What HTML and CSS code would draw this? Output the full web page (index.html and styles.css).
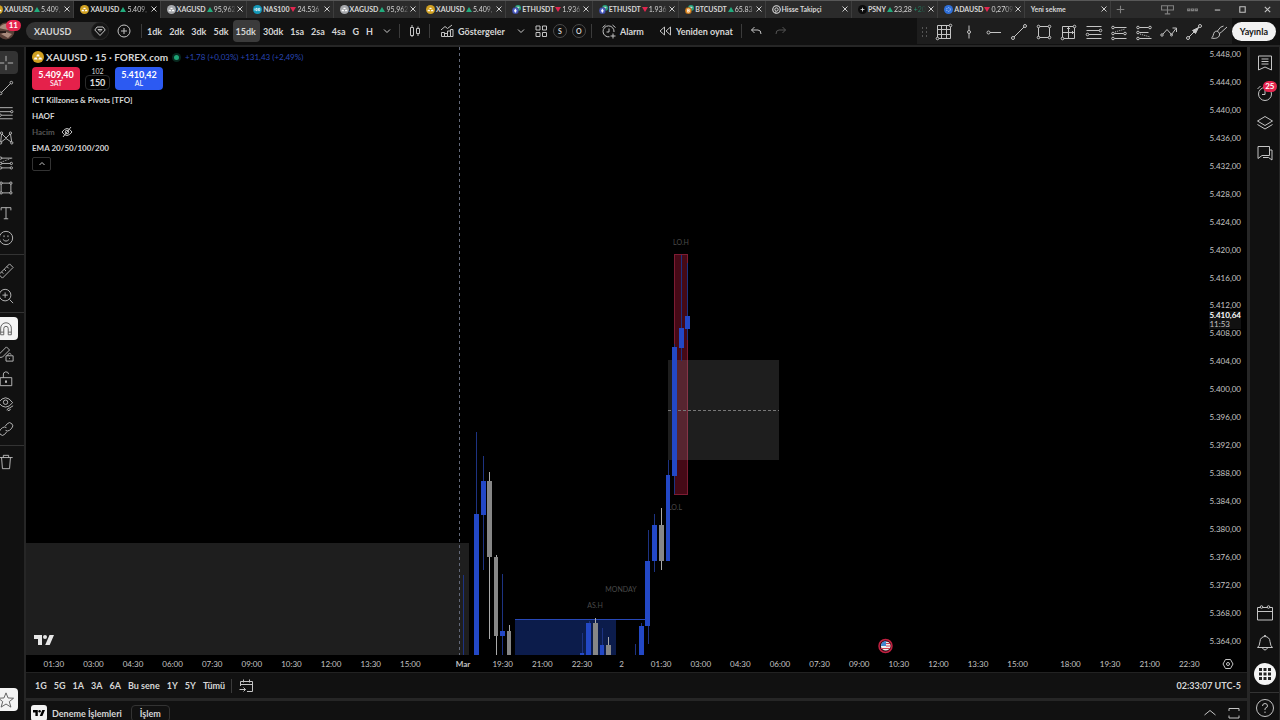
FILE: index.html
```
<!DOCTYPE html>
<html lang="tr">
<head>
    <meta charset="UTF-8">
    <meta name="viewport" content="width=device-width, initial-scale=1.0">
    <title>XAUUSD</title>
    <link rel="stylesheet" href="styles.css">
</head>
<body>
    <svg class="defs" aria-hidden="true">
        <symbol id="gold" viewBox="0 0 12 12"><circle cx="6" cy="6" r="6" fill="#d0a021"/><path d="M4.3 5.4 5 3.6h2l.7 1.8zM1.9 8.4l.7-2h2.2l.8 2zM6.3 8.4l.8-2h2.2l.8 2z" fill="#fff"/></symbol>
        <symbol id="silver" viewBox="0 0 12 12"><circle cx="6" cy="6" r="6" fill="#a5a7ab"/><path d="M4.3 5.4 5 3.6h2l.7 1.8zM1.9 8.4l.7-2h2.2l.8 2zM6.3 8.4l.8-2h2.2l.8 2z" fill="#fff"/></symbol>
        <symbol id="nas" viewBox="0 0 12 12"><circle cx="6" cy="6" r="6" fill="#1398b8"/><path d="M2.5 4.5v3M4 4.5h1.600v3H4zM7.300 4.500h1.800v3H7.300z" fill="none" stroke="#fff"/></symbol>
        <symbol id="eth" viewBox="0 0 12 12"><circle cx="8" cy="4" r="4" fill="#26a17b"/><path d="M6 3h4M8 3v3" stroke="#fff"/><circle cx="4.500" cy="7.500" r="4.500" fill="#4b5cc4" stroke="#222" stroke-width=".5"/><path d="m4.500 4.500 1.800 3-1.800 3-1.800-3z" fill="#fff"/></symbol>
        <symbol id="btc" viewBox="0 0 12 12"><circle cx="8" cy="4" r="4" fill="#26a17b"/><path d="M6 3h4M8 3v3" stroke="#fff"/><circle cx="4.500" cy="7.500" r="4.500" fill="#e58b22" stroke="#222" stroke-width=".5"/><path d="M3.500 5.500v4h1.500a1 1 0 0 0 0-2H3.500 5a1 1 0 0 0 0-2z" fill="none" stroke="#fff"/></symbol>
        <symbol id="target" viewBox="0 0 12 12"><circle cx="6" cy="6" r="5" fill="none" stroke="#ddd" stroke-width="1.500"/><circle cx="6" cy="6" r="2.200" fill="none" stroke="#ddd" stroke-width="1.300"/><path d="M5 8.500V11" stroke="#ddd"/></symbol>
        <symbol id="psny" viewBox="0 0 12 12"><circle cx="6" cy="6" r="6" fill="#0b0b0b"/><path d="M6 2.500 6.700 5.300 9.500 6 6.700 6.700 6 9.500 5.300 6.700 2.500 6l2.800-.7z" fill="#ddd"/></symbol>
        <symbol id="ada" viewBox="0 0 12 12"><circle cx="6" cy="6" r="6" fill="#2f6fd8"/><circle cx="6" cy="6" r="2.500" fill="none" stroke="#cfe0ff" stroke-dasharray="1.500 1"/></symbol>
        <symbol id="x" viewBox="0 0 6 6"><path d="m.5.5 5 5m0-5-5 5" fill="none" stroke="#ccc"/></symbol>
        <symbol id="down" viewBox="0 0 8 8"><path d="m1 2.500 3 3 3-3" fill="none" stroke="#ccc"/></symbol>
        <symbol id="tv" viewBox="0 0 20 10"><path d="M0 0h8v10H4V4H0zM15.500 0H20l-4.300 10h-4.500z"/><circle cx="11" cy="2" r="2"/></symbol>
    </svg>
    <div class="app">
        <header class="tabs">
            <nav class="tablist">
                <a class="tab" href="#"><svg class="coin"><use href="#gold"/></svg><b>XAUUSD</b><i class="up"></i><span class="quote">5.409,</span><svg class="close"><use href="#x"/></svg></a>
                <a class="tab active" href="#"><svg class="coin"><use href="#gold"/></svg><b>XAUUSD</b><i class="up"></i><span class="quote">5.409,</span><svg class="close"><use href="#x"/></svg></a>
                <a class="tab" href="#"><svg class="coin"><use href="#silver"/></svg><b>XAGUSD</b><i class="up"></i><span class="quote">95,962</span><svg class="close"><use href="#x"/></svg></a>
                <a class="tab" href="#"><svg class="coin"><use href="#nas"/></svg><b>NAS100</b><i class="dn"></i><span class="quote">24.536</span><svg class="close"><use href="#x"/></svg></a>
                <a class="tab" href="#"><svg class="coin"><use href="#silver"/></svg><b>XAGUSD</b><i class="up"></i><span class="quote">95,962</span><svg class="close"><use href="#x"/></svg></a>
                <a class="tab" href="#"><svg class="coin"><use href="#gold"/></svg><b>XAUUSD</b><i class="up"></i><span class="quote">5.409,</span><svg class="close"><use href="#x"/></svg></a>
                <a class="tab" href="#"><svg class="coin"><use href="#eth"/></svg><b>ETHUSDT</b><i class="dn"></i><span class="quote">1.936</span><svg class="close"><use href="#x"/></svg></a>
                <a class="tab" href="#"><svg class="coin"><use href="#eth"/></svg><b>ETHUSDT</b><i class="dn"></i><span class="quote">1.936</span><svg class="close"><use href="#x"/></svg></a>
                <a class="tab" href="#"><svg class="coin"><use href="#btc"/></svg><b>BTCUSDT</b><i class="up"></i><span class="quote">65.83</span><svg class="close"><use href="#x"/></svg></a>
                <a class="tab" href="#"><svg class="coin"><use href="#target"/></svg><b class="wide">Hisse Takipçi</b><svg class="close"><use href="#x"/></svg></a>
                <a class="tab" href="#"><svg class="coin"><use href="#psny"/></svg><b>PSNY</b><i class="up"></i><span class="quote">23,28 <em>+20</em></span><svg class="close"><use href="#x"/></svg></a>
                <a class="tab" href="#"><svg class="coin"><use href="#ada"/></svg><b>ADAUSD</b><i class="dn"></i><span class="quote">0,2709</span><svg class="close"><use href="#x"/></svg></a>
                <a class="tab" href="#"><b class="wide">Yeni sekme</b><svg class="close"><use href="#x"/></svg></a>
            </nav>
            <div class="window">
                <button aria-label="Yeni sekme"><svg viewBox="0 0 12 12"><path class="dim" d="M6 2.500v7M2.500 6h7"/></svg></button>
                <span class="grow"></span>
                <button aria-label="Düzen"><svg viewBox="0 0 12 12"><path class="dim" d="M.5 2.500h11v4H.5zM6 2.500V10M3.500 10h5"/></svg></button>
                <button aria-label="Menü"><svg viewBox="0 0 12 12"><path class="dim" d="M1.500 5.500h2v1.500h-2zM5 5.500h2v1.500H5zM8.500 5.500h2v1.500h-2z"/></svg></button>
                <button aria-label="Küçült"><svg viewBox="0 0 12 12"><path d="M3.500 6.500h5"/></svg></button>
                <button aria-label="Büyüt"><svg viewBox="0 0 12 12"><path d="M3.500 3.500h5v5h-5z"/></svg></button>
                <button aria-label="Kapat"><svg viewBox="0 0 12 12"><path d="m3.500 3.500 5 5m0-5-5 5"/></svg></button>
            </div>
        </header>

        <div class="toolbar">
            <button class="avatar" aria-label="Profil">
                <svg viewBox="0 0 18 18"><circle cx="9" cy="9" r="8.500" fill="#5a4038" stroke="none"/><path d="M2 6c3-5 10-6 13-1l-4 3-5-1zM4 12l5-2 6 2-4 4z" fill="#a88a7c" stroke="none"/><path d="M3 9h6v2H3z" fill="#261a18" stroke="none"/></svg>
                <span class="badge">11</span>
            </button>
            <button class="symbol">XAUUSD <svg viewBox="0 0 18 18"><circle cx="9" cy="9" r="8.500" fill="#161616" stroke="#222"/><path d="M6 5h6l2.200 3L9 13.500 3.800 8zM9 9.500 7 7.500h4z"/></svg></button>
            <button class="icon plus" aria-label="Ekle"><svg viewBox="0 0 18 18"><circle cx="9" cy="9" r="6"/><path d="M9 6v6M6 9h6"/></svg></button>
            <span class="sep"></span>
            <div class="frames">
                <button>1dk</button><button>2dk</button><button>3dk</button><button>5dk</button><button class="on">15dk</button><button>30dk</button><button>1sa</button><button>2sa</button><button>4sa</button><button>G</button><button>H</button>
            </div>
            <button class="icon" aria-label="Aralıklar"><svg class="small"><use href="#down"/></svg></button>
            <span class="sep"></span>
            <button class="icon wide" aria-label="Mumlar"><svg viewBox="0 0 18 18"><path d="M4.500 5.500h3v8h-3zM6 3v2.500M6 13.500V15M10.500 6.500h3v5h-3zM12 4.500v2M12 11.500V14"/></svg></button>
            <span class="sep"></span>
            <button class="labelled ind"><svg viewBox="0 0 18 18"><path d="M3.500 14.500v-4h3v4zM6.500 14.500v-3h3v3zM9.500 14.500V9h3v5.500zM12.500 14.500V7.500h2.500v7zM3 8l4-3.500 2.500 2L14 3"/></svg>Göstergeler</button>
            <button class="icon" aria-label="Favori göstergeler"><svg class="small"><use href="#down"/></svg></button>
            <button class="icon" aria-label="Şablonlar"><svg viewBox="0 0 18 18"><path d="M4 4h4v4H4zM10.500 4h4v4h-4zM4 10.500h4v4H4zM10.500 10.500h4v4h-4z"/></svg></button>
            <button class="round">S</button>
            <button class="round">O</button>
            <span class="sep"></span>
            <button class="labelled"><svg viewBox="0 0 18 18"><path d="M14 10a5.500 5.500 0 1 0-4.500 4.800M9 6.500v3.500H6.500M2.500 5.500l3-2.500M12.500 3l3 2.500M13 11.500v5M10.500 14h5"/></svg>Alarm</button>
            <button class="labelled replay"><svg viewBox="0 0 18 18"><path d="M8.500 5v8L4 9zM14.500 5v8L10 9z"/></svg>Yeniden oynat</button>
            <span class="sep"></span>
            <button class="icon wide" aria-label="Geri al"><svg viewBox="0 0 18 18"><path d="M7.500 5 4.500 8l3 3M4.500 8H11q3 0 3 4"/></svg></button>
            <button class="icon wide" aria-label="Yinele"><svg viewBox="0 0 18 18"><path class="faint" d="m10.500 5 3 3-3 3M13.500 8H7q-3 0-3 4"/></svg></button>
            <span class="grow"></span>
            <div class="favorites">
                <svg class="handle" viewBox="0 0 7 10"><path d="M1 0h1v2H1zM5 0h1v2H5zM1 4h1v2H1zM5 4h1v2H5zM1 8h1v2H1zM5 8h1v2H5z"/></svg>
                <button aria-label="Izgara"><svg viewBox="0 0 18 18"><path d="M2.500 2.500h13v13h-13zM6.500 2.500v13M11.500 2.500v13M2.500 6.500h13M2.500 11.500h13"/><g fill="#1d1d1d"><circle cx="15.500" cy="2.500" r="1.300"/><circle cx="2.500" cy="15.500" r="1.300"/></g></svg></button>
                <button aria-label="Dikey çizgi"><svg viewBox="0 0 18 18"><path d="M9 2.500v5M9 10.500v5"/><circle cx="9" cy="9" r="1.500"/></svg></button>
                <button aria-label="Yatay ışın"><svg viewBox="0 0 18 18"><path d="M5 9.500h11"/><circle cx="3.500" cy="9.500" r="1.500"/></svg></button>
                <button aria-label="Trend çizgisi"><svg viewBox="0 0 18 18"><path d="M4 14 14 4"/><circle cx="3" cy="15" r="1.500"/><circle cx="15" cy="3" r="1.500"/></svg></button>
                <button aria-label="Dikdörtgen"><svg viewBox="0 0 18 18"><path d="M3.500 3.500h11v11h-11z"/><g fill="#1d1d1d"><circle cx="3.500" cy="3.500" r="1.300"/><circle cx="14.500" cy="3.500" r="1.300"/><circle cx="3.500" cy="14.500" r="1.300"/><circle cx="14.500" cy="14.500" r="1.300"/></g></svg></button>
                <button aria-label="Tarih ve fiyat aralığı"><svg viewBox="0 0 18 18"><path d="M2.500 3.500h12v12h-12zM8.500 3.500v12M2.500 9.500h12M7 6l1.500-1.500L10 6M12 8l1.500 1.500L12 11"/><g fill="#1d1d1d"><circle cx="14.500" cy="3.500" r="1.300"/><circle cx="2.500" cy="15.500" r="1.300"/></g></svg></button>
                <button aria-label="Fibonacci"><svg viewBox="0 0 18 18"><path d="M1.500 3.500h15M1.500 7.500h13M4 11.500h12.500M1.500 15.500h15"/><circle cx="15.500" cy="7.500" r="1.300"/><circle cx="2.500" cy="11.500" r="1.300"/></svg></button>
                <button aria-label="Uzun pozisyon"><svg viewBox="0 0 18 18"><path d="M4.500 4.500h12M4.500 10.500h9M4.500 15.500h12"/><path d="m5 9 10-3" stroke-dasharray="1 1"/><circle cx="3" cy="4.500" r="1.300"/><circle cx="3" cy="10.500" r="1.300"/><circle cx="3" cy="15.500" r="1.300"/><circle cx="15" cy="10.500" r="1.300"/></svg></button>
                <button aria-label="Kısa pozisyon"><svg viewBox="0 0 18 18"><path d="M4.500 4.500h9M4.500 9.500h9M4.500 15.500h12"/><path d="m5 11 10 3" stroke-dasharray="1 1"/><circle cx="3" cy="4.500" r="1.300"/><circle cx="3" cy="9.500" r="1.300"/><circle cx="3" cy="15.500" r="1.300"/><circle cx="15" cy="4.500" r="1.300"/></svg></button>
                <button aria-label="Yol"><svg viewBox="0 0 18 18"><path d="m3 11 4-4.500 4.500 5L16 5.500M12.500 5h4v4"/><circle cx="2" cy="12" r="1.200"/><circle cx="11.500" cy="12" r="1"/></svg></button>
                <button aria-label="Ok"><svg viewBox="0 0 18 18"><path d="m4 14 10-10"/><path d="m7.500 7.500 6-3-3 6z" fill="#ccc"/><circle cx="3" cy="15" r="1.500"/><circle cx="15" cy="3" r="1.500"/></svg></button>
                <button aria-label="Fırça"><svg viewBox="0 0 18 18"><path d="M1.500 15c2-1 1.500-4 3-6 2-2 5.500 0 5 3-.5 3-4.500 4-8 3zM7.500 8q3-5 6-5M9.500 10.500l2-1.500 5.500-5"/></svg></button>
            </div>
            <button class="publish">Yayınla</button>
        </div>

        <div class="body">
            <aside class="rail left">
                <button class="sel" aria-label="İmleç"><svg viewBox="0 0 18 18"><path d="M9 1v6M9 11v6M1 9h6M11 9h6"/></svg></button>
                <button aria-label="Çizgiler"><svg viewBox="0 0 18 18"><path d="M4 14 14 4"/><circle cx="3" cy="15" r="1.500"/><circle cx="15" cy="3" r="1.500"/></svg></button>
                <button aria-label="Fibonacci araçları"><svg viewBox="0 0 18 18"><path d="M1.500 3h15M1.500 7.500h13M4 11.500h12.500M1.500 15.500h15"/><circle cx="15.500" cy="7.500" r="1.300"/><circle cx="2.500" cy="11.500" r="1.300"/></svg></button>
                <button aria-label="Formasyonlar"><svg viewBox="0 0 18 18"><path d="m3 14 1-10 5 5 5-5 1.500 10L9 9.500z"/><g fill="#111"><circle cx="3" cy="14.500" r="1.300"/><circle cx="4" cy="3.500" r="1.300"/><circle cx="14" cy="3.500" r="1.300"/><circle cx="15.500" cy="14.500" r="1.300"/></g></svg></button>
                <button aria-label="Tahmin"><svg viewBox="0 0 18 18"><path d="M4 3.500h12M4 9.500h10M4 14.500h10"/><path d="m4 8 10-4" stroke-dasharray="1 1"/><circle cx="3" cy="3.500" r="1.300"/><circle cx="3" cy="9.500" r="1.300"/><circle cx="3" cy="14.500" r="1.300"/><circle cx="15" cy="9.500" r="1.300"/><circle cx="15" cy="14.500" r="1.300"/></svg></button>
                <button aria-label="Şekiller"><svg viewBox="0 0 18 18"><path d="M3.500 3.500h11v11h-11z"/><g fill="#111"><circle cx="3.500" cy="3.500" r="1.300"/><circle cx="14.500" cy="3.500" r="1.300"/><circle cx="3.500" cy="14.500" r="1.300"/><circle cx="14.500" cy="14.500" r="1.300"/></g></svg></button>
                <button aria-label="Metin"><svg viewBox="0 0 18 18"><path d="M3.500 6V3h11v3M9 3v12.500M6.500 15.500h5"/></svg></button>
                <button aria-label="Simgeler"><svg viewBox="0 0 18 18"><circle cx="9" cy="9" r="7.500"/><path d="M5.500 10.500q3.500 4 7 0M6.800 6v2M11.200 6v2"/></svg></button>
                <hr>
                <button aria-label="Ölçüm"><svg viewBox="0 0 18 18"><path d="M1 13 13 1l4 4L5 17zM4 10l2 2M7 7l2 2M10 4l2 2"/></svg></button>
                <button aria-label="Yakınlaştır"><svg viewBox="0 0 18 18"><circle cx="8" cy="8" r="6.500"/><path d="m13 13 4 4M8 5v6M5 8h6"/></svg></button>
                <hr>
                <button class="lit" aria-label="Mıknatıs"><svg viewBox="0 0 18 18"><path d="M3 15.500V8a6 6 0 0 1 12 0v7.500h-3.500V8.500a2.500 2.500 0 0 0-5 0v7zM3 12.500h3.500M11.500 12.500H15"/></svg></button>
                <button aria-label="Çizim modu"><svg viewBox="0 0 18 18"><path d="m1 13 .500-4L9.500 1 13 4.500l-8 8zM9 11h8v6H9zM11 11V9.500q2-2.500 4 0M13 13.500v1"/></svg></button>
                <button aria-label="Kilitle"><svg viewBox="0 0 18 18"><path d="M2.500 7.500h13v9h-13zM6 7.500V4.500a3 3 0 0 1 6-1"/><path d="M8.500 11h1v2h-1z" fill="#ccc"/></svg></button>
                <button aria-label="Gizle"><svg viewBox="0 0 18 18"><path d="M.5 7.500q8-11 16 0-8 10-16 0zM10 16q1-3 3-2.500l4-2.500M11 16.500q3 0 3-2"/><circle cx="8.500" cy="7" r="2.500"/></svg></button>
                <button aria-label="Bağlantı"><svg viewBox="0 0 18 18"><path d="m8 6 2.500-3a3.500 3.500 0 0 1 5 5L13 10.500q-2.500 1.500-4.500 0M10 12l-2.500 3a3.500 3.500 0 0 1-5-5L5 7.500q2.500-1.500 4.500 0"/></svg></button>
                <hr>
                <button aria-label="Sil"><svg viewBox="0 0 18 18"><path d="M1.500 4h15M6 4V1.500h6V4M4 4l1 12.500h8L14 4"/></svg></button>
                <span class="grow"></span>
                <button class="lit star" aria-label="Favoriler"><svg viewBox="0 0 18 18"><path d="m9 1 2.300 5.700 6.200.3-4.800 3.800L14.500 17 9 13.500 3.500 17l1.800-6.200L.5 7l6.200-.3z"/></svg></button>
            </aside>

            <main class="center">
                <section class="chart">
                    <div class="plot">
                        <svg class="candles" viewBox="26 47 1182 608" preserveAspectRatio="xMinYMax slice">
                            <rect x="26" y="543" width="443" height="112" fill="#1e1e1e"/>
                            <path d="M459.500 47v608" stroke="#626878" stroke-dasharray="3 3" fill="none"/>
                            <!-- sessions -->
                            <rect x="515" y="619" width="101" height="36" fill="#0c1c4b"/>
                            <path d="M515 619.500h133" stroke="#2748b8" fill="none"/>
                            <rect x="674.500" y="254.500" width="13" height="240" fill="#450916" stroke="#7d1c33"/>
                            <rect x="668" y="360" width="111" height="100" fill="#b4b4b4" fill-opacity=".17"/>
                            <path d="M668 410.500h111" stroke="#777" stroke-dasharray="3 2" fill="none"/>
                            <g class="marks">
                                <text x="681" y="245">LO.H</text>
                                <text x="675" y="510">LO.L</text>
                                <text x="621" y="592">MONDAY</text>
                                <text x="595" y="608">AS.H</text>
                            </g>
                            <path class="wick-up" d="M463.500 575v80M476.500 432v90M483.500 456v114M502.500 574v81M582.500 633v22M589.500 621v5M602.500 628v20M635.500 644v11M641.500 623v5M648.500 530v114M654.500 514v58M668.500 460v20M674.500 344v150M681.500 255v106M687.500 263v77"/>
                            <path class="wick-down" d="M489.500 472v167M496.500 555v100M509.500 625v30M595.500 618v30M608.500 637v18M661.500 508v62"/>
                            <path class="up-body" d="M474 514h5v141h-5zM481 481h5v34h-5zM500 631h5v5h-5zM580 653h4v2h-4zM586 623h5v32h-5zM600 645h4v10h-4zM639 626h5v29h-5zM645 561h5v65h-5zM652 525h5v36h-5zM666 475h4v86h-4zM672 347h5v129h-5zM679 328h5v20h-5zM685 316h5v13h-5z"/>
                            <path class="down-body" d="M487 481h5v76h-5zM494 557h4v79h-4zM507 631h4v24h-4zM593 623h5v32h-5zM606 645h5v10h-5zM659 525h5v36h-5z"/>
                            <!-- economic event -->
                            <circle cx="885.500" cy="646" r="6.500" fill="#300a14" stroke="#c02040" stroke-width="1.500"/>
                            <path d="M881 645a5 5 0 0 1 9.500 0v2a5 5 0 0 1-9.500 0z" fill="#eee"/>
                            <path d="M886 643.500h4M886 646h5M881 648.500h9" stroke="#d04050"/>
                            <path d="M881 646a5 5 0 0 1 5-5v5z" fill="#3f86cf"/>
                        </svg>
                        <div class="legend">
                            <div class="title"><svg class="coin big"><use href="#gold"/></svg><h1>XAUUSD · 15 · FOREX.com</h1><span class="live"></span><span class="change">+1,78 (+0,03%) +131,43 (+2,49%)</span></div>
                            <div class="deal">
                                <button class="sell"><b>5.409,40</b>SAT</button>
                                <div class="spread"><label for="lot">102</label><input id="lot" value="150"></div>
                                <button class="buy"><b>5.410,42</b>AL</button>
                            </div>
                            <div class="study">ICT Killzones &amp; Pivots [TFO]</div>
                            <div class="study">HAOF</div>
                            <div class="study off">Hacim <svg viewBox="0 0 12 12"><path d="M1 6q5-7 10 0-5 7-10 0zM2 11l8-10"/><circle cx="6" cy="6" r="1.800"/></svg></div>
                            <div class="study">EMA 20/50/100/200</div>
                            <button class="fold" aria-label="Daralt"><svg viewBox="0 0 8 8"><path d="M1.500 5 4 2.500 6.500 5"/></svg></button>
                        </div>
                        <svg class="logo"><use href="#tv"/></svg>
                    </div>
                    <div class="prices">
                        <span>5.448,00</span><span>5.444,00</span><span>5.440,00</span><span>5.436,00</span><span>5.432,00</span><span>5.428,00</span><span>5.424,00</span><span>5.420,00</span><span>5.416,00</span><span>5.412,00</span><span>5.408,00</span><span>5.404,00</span><span>5.400,00</span><span>5.396,00</span><span>5.392,00</span><span>5.388,00</span><span>5.384,00</span><span>5.380,00</span><span>5.376,00</span><span>5.372,00</span><span>5.368,00</span><span>5.364,00</span>
                        <div class="last"><b>5.410,64</b>11:53</div>
                    </div>
                </section>
                <div class="times">
                    <div class="ticks">
                        <span>01:30</span><span>03:00</span><span>04:30</span><span>06:00</span><span>07:30</span><span>09:00</span><span>10:30</span><span>12:00</span><span>13:30</span><span>15:00</span><i></i><span><b>Mar</b></span><span>19:30</span><span>21:00</span><span>22:30</span><span>2</span><span>01:30</span><span>03:00</span><span>04:30</span><span>06:00</span><span>07:30</span><span>09:00</span><span>10:30</span><span>12:00</span><span>13:30</span><span>15:00</span><i></i><span>18:00</span><span>19:30</span><span>21:00</span><span>22:30</span>
                    </div>
                    <button class="gear" aria-label="Ölçek ayarları"><svg viewBox="0 0 12 12"><path d="M3.500 1.500h5L11 6l-2.500 4.500h-5L1 6z"/><circle cx="6" cy="6" r="1.500"/></svg></button>
                </div>
                <div class="ranges">
                    <button>1G</button><button>5G</button><button>1A</button><button>3A</button><button>6A</button><button>Bu sene</button><button>1Y</button><button>5Y</button><button>Tümü</button>
                    <span class="sep"></span>
                    <button class="goto" aria-label="Tarihe git"><svg viewBox="0 0 18 18"><path d="M3.500 9V4.500h12v10H10M3.500 7.500h12M6.500 2.500v3M12.500 2.500v3M2.500 12.500h6M6.500 10.500l2 2-2 2"/></svg></button>
                    <span class="grow"></span>
                    <button class="clock">02:33:07 UTC-5</button>
                </div>
                <footer class="panel">
                    <span class="mini"><svg><use href="#tv"/></svg></span>
                    <button>Deneme İşlemleri</button>
                    <button class="trade">İşlem</button>
                    <span class="grow"></span>
                    <button aria-label="Paneli aç"><svg viewBox="0 0 14 14"><path d="M1.500 9 7 4.500 12.500 9"/></svg></button>
                    <button aria-label="Paneli büyüt"><svg viewBox="0 0 14 14"><path d="M2 5V2.500h10V5M2 9.500V12h10V9.500"/></svg></button>
                </footer>
            </main>

            <aside class="rail right">
                <button aria-label="İzleme listesi"><svg viewBox="0 0 18 18"><path d="M2.500 2h13v14L9 13l-6.500 3zM5.500 5h7M5.500 7.500h7M5.500 10h7"/></svg></button>
                <button aria-label="Alarmlar"><svg viewBox="0 0 18 18"><circle cx="9" cy="10" r="6.500"/><path d="M9 6v4.500H6M1.500 5l3-3"/></svg><span class="badge">25</span></button>
                <button aria-label="Nesne ağacı"><svg viewBox="0 0 18 18"><path d="m9 2.500 7.500 4.500L9 11.500 1.500 7zM1.500 10.500 9 15l7.500-4.500"/></svg></button>
                <button aria-label="Sohbet"><svg viewBox="0 0 18 18"><path d="M2 2.500h11.500v9H6L2 14.500zM13.500 6h2.500v10l-3.500-2.500H7"/></svg></button>
                <span class="grow"></span>
                <button aria-label="Takvim"><svg viewBox="0 0 18 18"><path d="M1.500 3.500h15v12.500h-15zM1.500 7.500h15"/><circle cx="5.500" cy="3" r="1.300" fill="#111"/><circle cx="12.500" cy="3" r="1.300" fill="#111"/></svg></button>
                <button aria-label="Bildirimler"><svg viewBox="0 0 18 18"><path d="M1.500 13.500q2-1 2.500-6a5 5 0 0 1 10 0q.500 5 2.500 6zM6.500 14q2.500 4 5 0M8 2q1-1.500 2 0"/></svg></button>
                <button class="apps" aria-label="Ürünler"><svg viewBox="0 0 18 18"><path d="M3 3h3v3H3zM7.500 3h3v3h-3zM12 3h3v3h-3zM3 7.500h3v3H3zM7.500 7.500h3v3h-3zM12 7.500h3v3h-3zM3 12h3v3H3zM7.500 12h3v3h-3zM12 12h3v3h-3z"/></svg></button>
                <hr>
                <button class="help" aria-label="Yardım"><svg viewBox="0 0 18 18"><circle cx="9" cy="9" r="8.500"/><path d="M6.500 7q0-2.500 2.500-2.500T11.500 7Q11.500 8.500 9 9.500V11M9 12.500V14"/></svg></button>
            </aside>
        </div>
    </div>
</body>
</html>
```
FILE: styles.css
```
* {
    box-sizing: border-box;
}
body {
    margin: 0;
    background: #262626;
    color: #d6d6d6;
    font-family: Lato, "Liberation Sans", sans-serif;
    font-size: 9px;
    overflow: hidden;
}
button {
    display: flex;
    align-items: center;
    justify-content: center;
    flex-shrink: 0;
    position: relative;
    padding: 0;
    border: 0;
    background: none;
    color: inherit;
    font: inherit;
    font-weight: 700;
    white-space: nowrap;
}
svg {
    display: block;
    flex-shrink: 0;
}
button svg, .study svg {
    width: 18px;
    height: 18px;
    fill: none;
    stroke: #c4c4c4;
}
.dim {
    stroke: #808080;
}
.faint {
    stroke: #555;
}
.defs {
    position: absolute;
    width: 0;
    height: 0;
}
.grow {
    flex: 1;
}
/* left edge runs out of the window */
.app {
    display: flex;
    flex-direction: column;
    height: 100vh;
    margin-left: -12px;
}

.tabs {
    display: flex;
    height: 18px;
    border-top: 1px solid #585858;
    background: #2b2b2b;
}
.tablist {
    display: flex;
    flex: 1;
    min-width: 0;
}
.tab {
    display: flex;
    align-items: center;
    flex: 1 1 0;
    min-width: 0;
    gap: 1px;
    padding: 0 3px 1px 6px;
    border-right: 1px solid #3d3d3d;
    color: #d6d6d6;
    font-size: 7px;
    text-decoration: none;
    white-space: nowrap;
}
.tab.active {
    background: #111;
}
.coin {
    width: 9px;
    height: 9px;
}
.coin.big {
    width: 12px;
    height: 12px;
}
.tab .wide {
    flex: 1;
}
.quote {
    flex: 1;
    min-width: 0;
    overflow: hidden;
    mask-image: linear-gradient(90deg, #000 60%, transparent);
}
.quote em {
    color: #22ab7d;
    font-style: normal;
}
.close {
    width: 6px;
    height: 6px;
}
.up, .dn {
    border: 3px solid transparent;
    border-top-width: 0;
    border-bottom: 5px solid #22ab7d;
}
.dn {
    border-top: 5px solid #e0264f;
    border-bottom-width: 0;
}
.window {
    display: flex;
    align-items: center;
    gap: 12px;
    width: 169px;
    padding: 0 6px 1px 3px;
}
.window svg {
    width: 13px;
    height: 13px;
}

.toolbar {
    display: flex;
    align-items: center;
    height: 27px;
    padding-bottom: 1px;
    background: #111;
}
.avatar {
    margin: 0 11px 0 9px;
}
.badge {
    position: absolute;
    top: -2px;
    right: -6px;
    padding: 0 3px;
    border-radius: 6px;
    background: #e5264f;
    color: #fff;
    font-size: 8px;
    line-height: 11px;
}
.symbol {
    justify-content: space-between;
    width: 83px;
    height: 18px;
    padding-left: 8px;
    border-radius: 9px;
    background: #333;
}
.icon {
    width: 20px;
}
.icon.plus {
    width: 30px;
}
.icon.wide {
    width: 25px;
}
.icon .small {
    width: 8px;
    height: 8px;
}
.sep {
    width: 1px;
    height: 14px;
    margin: 0 2px;
    background: #3b3b3b;
}
.frames {
    display: flex;
}
.frames button {
    height: 22px;
    padding: 0 4px 0 3px;
    border-radius: 4px;
}
.frames .on {
    background: #3b3b3b;
}
.labelled {
    gap: 2px;
    padding: 0 6px;
}
.round {
    width: 14px;
    height: 14px;
    margin: 0 3px 0 2px;
    border: 1px solid #4a4a4a;
    border-radius: 50%;
    font-size: 7px;
}
.favorites {
    display: flex;
    align-items: center;
    align-self: stretch;
    gap: 7px;
    padding: 1px 4px 0;
    background: #1d1d1d;
}
.handle {
    width: 7px;
    height: 10px;
    fill: #555;
}
.publish {
    height: 19px;
    margin: 0 4px 0 0;
    padding: 0 8px;
    border-radius: 10px;
    background: #f2f2f2;
    color: #151515;
}

.body {
    display: flex;
    flex: 1;
    gap: 2px;
    min-height: 0;
    padding-top: 2px;
}
.rail {
    display: flex;
    flex-direction: column;
    align-items: center;
    background: #111;
}
.rail hr {
    width: 100%;
    margin: 4px 0 3px;
    border: 0;
    border-top: 1px solid #333;
}
.left {
    width: 36px;
    padding: 3px 0 8px;
}
.left button {
    width: 24px;
    height: 25px;
}
.left svg {
    width: 16px;
    height: 16px;
}
.left .sel {
    height: 23px;
    margin: 1px 0;
    border-radius: 4px;
    background: #333;
}
.left .lit {
    height: 23px;
    margin: 1px 0;
    border-radius: 4px;
    background: #f4f4f4;
}
.left .lit svg {
    stroke: #555;
}
.right {
    width: 30px;
    margin-left: 1px;
    padding-top: 1px;
    border-right: 1px solid #262626;
}
.right button {
    width: 28px;
    height: 30px;
}
.right .apps {
    width: 22px;
    height: 22px;
    margin: 5px 0 3px;
    border-radius: 50%;
    background: #f4f4f4;
}
.right .apps svg {
    fill: #222;
    stroke: none;
}
.right .badge {
    top: 3px;
    right: 2px;
    padding: 0 2px;
}
.right .help {
    height: 24px;
}

.center {
    display: flex;
    flex: 1;
    flex-direction: column;
    min-width: 0;
}
.chart {
    display: flex;
    flex: 1;
    min-height: 0;
    background: #000;
}
.plot {
    position: relative;
    flex: 1;
    min-width: 0;
}
.candles {
    position: absolute;
    width: 100%;
    height: 100%;
}
.marks {
    fill: #4a4a4a;
    font-size: 7px;
    text-anchor: middle;
}
.wick-up {
    fill: none;
    stroke: #1d3382;
}
.wick-down {
    fill: none;
    stroke: #aaa;
}
.up-body {
    fill: #2348c6;
}
.down-body {
    fill: #878787;
}
.legend {
    position: absolute;
    top: 3px;
    left: 6px;
}
.title {
    display: flex;
    align-items: center;
    gap: 2px;
    height: 14px;
}
h1 {
    margin: 0;
    font-size: 10px;
    font-weight: 700;
}
.live {
    width: 5px;
    height: 5px;
    margin: 0 4px;
    border-radius: 50%;
    background: #1fa577;
    box-shadow: 0 0 0 2px #07281e;
}
.change {
    color: #2846b4;
    font-size: 8px;
}
.deal {
    display: flex;
    align-items: flex-end;
    gap: 5px;
    margin: 3px 0 2px;
}
.sell, .buy {
    flex-direction: column;
    width: 48px;
    height: 23px;
    border-radius: 4px;
    background: #e5214b;
    color: #fff;
    font-size: 7px;
    font-weight: 400;
    line-height: 9px;
}
.sell b, .buy b {
    font-size: 9px;
}
.buy {
    background: #2c5af2;
}
.spread {
    display: flex;
    flex-direction: column;
    align-items: center;
    font-size: 7px;
    line-height: 8px;
}
.spread input {
    width: 25px;
    height: 15px;
    padding: 0;
    border: 1px solid #2b2b2b;
    border-radius: 4px;
    background: #000;
    color: #e0e0e0;
    font: 700 9px Lato, sans-serif;
    text-align: center;
}
.study {
    display: flex;
    align-items: center;
    gap: 6px;
    height: 16px;
    font-size: 8px;
    font-weight: 700;
}
.study svg {
    width: 12px;
    height: 12px;
}
.off {
    color: #555;
}
.fold {
    width: 19px;
    height: 14px;
    margin-top: 1px;
    border: 1px solid #333;
    border-radius: 2px;
}
.fold svg {
    width: 8px;
    height: 8px;
}
.logo {
    position: absolute;
    bottom: 10px;
    left: 8px;
    width: 20px;
    height: 10px;
    fill: #e6e6e6;
}
.prices {
    display: flex;
    position: relative;
    flex-direction: column;
    justify-content: space-between;
    width: 41px;
    padding: 2px 6px 9px 0;
    color: #c4c4c4;
    font-size: 8px;
    line-height: 10px;
    text-align: right;
}
.last {
    position: absolute;
    top: 264px;
    right: 6px;
    background: #111;
    line-height: 9px;
    text-align: left;
}
.last b {
    display: block;
    color: #fff;
}
.times {
    display: flex;
    align-items: center;
    height: 17px;
    padding-left: 8px;
    background: #000;
    color: #c4c4c4;
    font-size: 8px;
}
.ticks {
    display: flex;
    flex: 1;
    min-width: 0;
}
.ticks span {
    flex: 3 1 0;
    text-align: center;
}
.ticks i {
    flex: 1 1 0;
}
.gear {
    width: 38px;
}
.gear svg {
    width: 12px;
    height: 12px;
}
.ranges {
    display: flex;
    align-items: center;
    height: 26px;
    padding: 0 6px;
    border-top: 1px solid #222;
    background: #111;
}
.ranges button {
    padding: 0 4px 0 3px;
}
.ranges .clock {
    padding: 0;
}
.panel {
    display: flex;
    align-items: center;
    height: 19px;
    margin-top: 3px;
    padding: 5px 1px 0 5px;
    background: #111;
}
.panel button {
    padding: 0 5px;
}
.panel svg {
    width: 14px;
    height: 14px;
}
.mini {
    display: grid;
    place-items: center;
    width: 16px;
    height: 16px;
    border-radius: 3px;
    background: #f2f2f2;
}
.panel .mini svg {
    width: 12px;
    height: 6px;
}
.panel .trade {
    height: 17px;
    padding: 0 8px;
    margin-left: 4px;
    border: 1px solid #333;
    border-radius: 4px;
}
```
